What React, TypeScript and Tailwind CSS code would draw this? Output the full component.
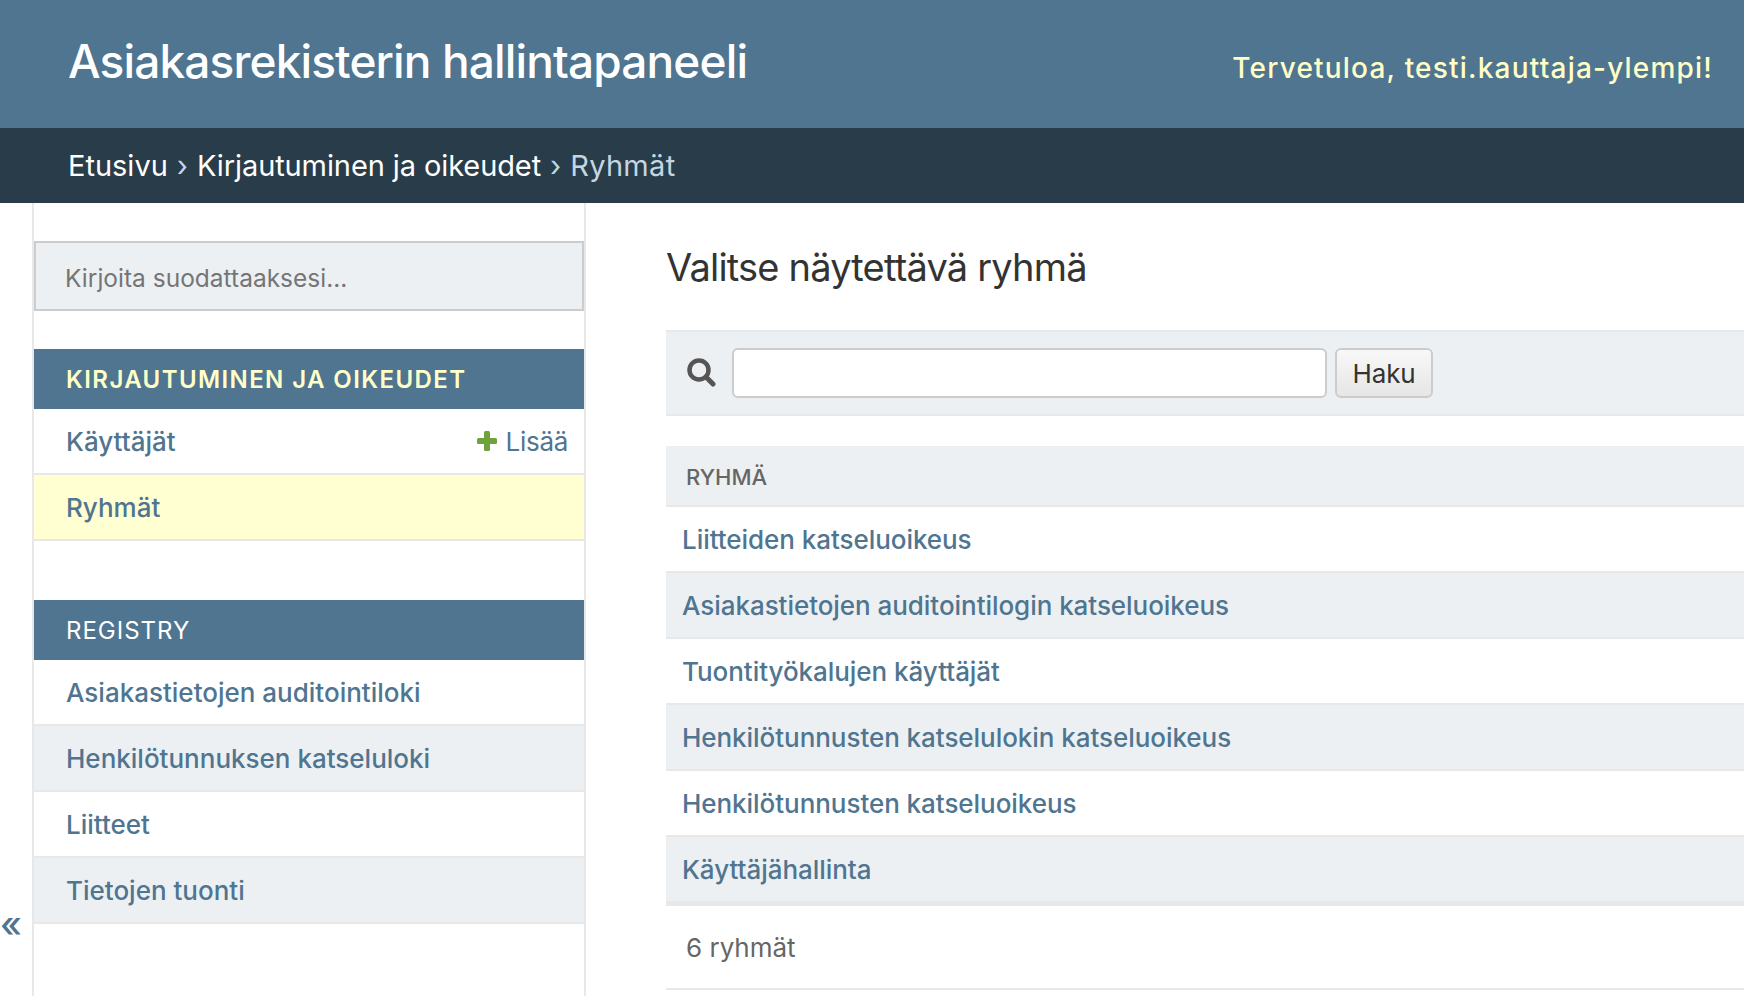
import React from 'react';

const font = 'font-["Inter","Liberation_Sans",sans-serif]';

const SidebarRow = ({ label, stripe, current, add }: { label: string; stripe?: boolean; current?: boolean; add?: boolean }) => (
    <div
        className={`flex h-[66px] items-center justify-between border-b-2 border-[#e8e8e8] pl-[32px] pr-[16px] text-[26px] font-medium text-[#4f7590] ${
            current ? 'bg-[#ffffd1]' : stripe ? 'bg-[#edf0f3]' : 'bg-white'
        }`}
    >
        <span>{label}</span>
        {add && (
            <span className="flex items-center gap-[9px] font-normal tracking-[-0.3px]">
                <svg width="20" height="20" viewBox="0 0 20 20" fill="#70a13c">
                    <rect x="7" y="0" width="6" height="20" rx="1.5" />
                    <rect x="0" y="7" width="20" height="6" rx="1.5" />
                </svg>
                Lisää
            </span>
        )}
    </div>
);

const SidebarHeader = ({ label, current }: { label: string; current?: boolean }) => (
    <div
        className={`flex h-[60px] items-center bg-[#4f7590] pl-[32px] pt-[2px] text-[24px] ${
            current ? 'font-semibold tracking-[1.4px] text-[#ffffc8]' : 'tracking-[1px] text-white'
        }`}
    >
        {label}
    </div>
);

const groups = [
    'Liitteiden katseluoikeus',
    'Asiakastietojen auditointilogin katseluoikeus',
    'Tuontityökalujen käyttäjät',
    'Henkilötunnusten katselulokin katseluoikeus',
    'Henkilötunnusten katseluoikeus',
    'Käyttäjähallinta',
];

const App = () => {
    return (
        <div className={`flex h-[996px] w-[1744px] flex-col overflow-hidden bg-white ${font}`}>
            <header className="flex h-[128px] shrink-0 items-center justify-between bg-[#4f7590] pl-[68px] pr-[31px]">
                <h1 className="pb-[6px] text-[46px] font-medium tracking-[-0.87px] text-white">Asiakasrekisterin hallintapaneeli</h1>
                <div className="pt-[8px] text-[28px] font-medium tracking-[1.2px] text-[#ffffc8]">Tervetuloa, testi.kauttaja-ylempi!</div>
            </header>
            <nav className="flex h-[75px] shrink-0 items-center gap-[9px] bg-[#293c49] pl-[68px] pt-[1px] text-[29px] text-white">
                <span>Etusivu</span>
                <span className="text-[#c5d6e2]">›</span>
                <span className="tracking-[-0.1px]">Kirjautuminen ja oikeudet</span>
                <span className="text-[#c5d6e2]">›</span>
                <span className="tracking-[0.3px] text-[#c5d6e2]">Ryhmät</span>
            </nav>
            <div className="flex min-h-0 flex-1">
                <button className="flex w-[34px] shrink-0 items-end justify-start border-r-2 border-[#e8e8e8] pb-[54px] text-[36px] font-medium leading-none text-[#4f7590]">
                    «
                </button>
                <aside className="w-[552px] shrink-0 border-r-2 border-[#e8e8e8] pt-[38px]">
                    <input
                        readOnly
                        placeholder="Kirjoita suodattaaksesi..."
                        className="h-[70px] w-full border-2 border-[#cccccc] bg-[#edf0f3] px-[29px] pt-[3px] text-[24.5px] text-[#666] placeholder:text-[#757575]"
                    />
                    <div className="mt-[38px]">
                        <SidebarHeader label="KIRJAUTUMINEN JA OIKEUDET" current />
                        <SidebarRow label="Käyttäjät" add />
                        <SidebarRow label="Ryhmät" current />
                    </div>
                    <div className="mt-[59px]">
                        <SidebarHeader label="REGISTRY" />
                        <SidebarRow label="Asiakastietojen auditointiloki" />
                        <SidebarRow label="Henkilötunnuksen katseluloki" stripe />
                        <SidebarRow label="Liitteet" />
                        <SidebarRow label="Tietojen tuonti" stripe />
                    </div>
                </aside>
                <main className="min-w-0 flex-1 pl-[80px]">
                    <h2 className="flex h-[127px] items-center pt-[2px] text-[38px] tracking-[-0.8px] text-[#333]">Valitse näytettävä ryhmä</h2>
                    <div className="flex h-[86px] items-center border-y-2 border-[#e8e8e8] bg-[#edf0f3] pl-[20px]">
                        <svg width="30" height="30" viewBox="0 0 30 30" fill="none" stroke="#555" className="mb-[2px] shrink-0">
                            <circle cx="13" cy="13" r="9.5" strokeWidth="4.5" />
                            <line x1="20" y1="20" x2="27" y2="27" strokeWidth="5" strokeLinecap="round" />
                        </svg>
                        <input readOnly className="ml-[16px] h-[50px] w-[595px] rounded-[6px] border-2 border-[#cccccc] bg-white" />
                        <button className="ml-[8px] h-[50px] w-[98px] rounded-[6px] border-2 border-[#cccccc] bg-linear-to-b from-[#f8f8f8] to-[#e6e6e6] text-[26px] tracking-[-0.1px] text-[#333]">
                            Haku
                        </button>
                    </div>
                    <div className="mt-[30px] flex h-[61px] items-center border-b-2 border-[#e8e8e8] bg-[#edf0f3] pl-[20px] pt-[3px] text-[22px] font-medium text-[#666]">
                        RYHMÄ
                    </div>
                    {groups.map((group, i) => (
                        <div
                            key={group}
                            className={`flex h-[66px] items-center border-b-2 border-[#e8e8e8] pl-[16px] pt-[1px] text-[26px] font-medium tracking-[-0.05px] text-[#4f7590] ${
                                i % 2 === 1 ? 'bg-[#edf0f3]' : 'bg-white'
                            }`}
                        >
                            {group}
                        </div>
                    ))}
                    <div className="flex h-[87px] items-center border-t-[3px] border-b-2 border-[#e8e8e8] pl-[20px] pt-[1px] text-[26px] text-[#666]">
                        6 ryhmät
                    </div>
                </main>
            </div>
        </div>
    );
};

export default App;
